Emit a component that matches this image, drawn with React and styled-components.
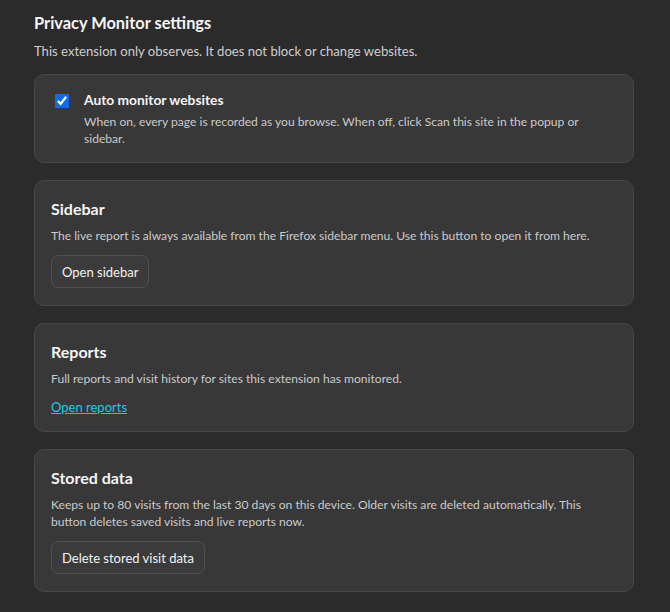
import React from "react";
import styled, { createGlobalStyle } from "styled-components";

const GlobalStyle = createGlobalStyle`
  html, body {
    margin: 0;
    background: #2b2b2b;
  }
  body {
    font-family: Lato, "Noto Sans", sans-serif;
    color: #f2f2f2;
  }
`;

const Page = styled.main`
  padding: 11px 36px 20px 34px;
  max-width: 600px;
`;

const PageTitle = styled.h1`
  margin: 0 0 8px;
  font-size: 16.4px;
  line-height: 24px;
  font-weight: 700;
  color: #f4f4f4;
`;

const Intro = styled.p`
  margin: 0 0 14px;
  font-size: 13.1px;
  line-height: 17px;
  color: #cfcfcf;
`;

const Stack = styled.div`
  display: flex;
  flex-direction: column;
  gap: 17px;
`;

const Card = styled.section`
  background: #383838;
  border: 1px solid #474747;
  border-radius: 10px;
  padding: ${(props) => (props.compact ? "16px 16px 15px" : "16px 16px 17px")};
`;

const CardTitle = styled.h2`
  margin: 0 0 6px;
  font-size: 16px;
  line-height: 24px;
  font-weight: 700;
  color: #f4f4f4;
`;

const Text = styled.p`
  margin: 0;
  font-size: 12.1px;
  line-height: 17px;
  color: #cbcbcb;
`;

const CheckRow = styled.label`
  display: flex;
  align-items: flex-start;
  gap: 15px;
  cursor: pointer;
`;

const Check = styled.input`
  width: 14px;
  height: 14px;
  margin: 3px 0 0 4px;
  accent-color: #0b6cf2;
  flex: none;
`;

const CheckText = styled.div`
  display: flex;
  flex-direction: column;
  gap: 4px;
`;

const CheckTitle = styled.span`
  font-size: 13.8px;
  line-height: 18px;
  font-weight: 700;
  color: #f4f4f4;
`;

const Button = styled.button`
  display: block;
  margin-top: 11px;
  height: 33px;
  padding: 0 10px;
  background: #3b3b3b;
  border: 1px solid #505050;
  border-radius: 7px;
  color: #f2f2f2;
  font-family: inherit;
  font-size: 13px;
  cursor: pointer;
  &:hover {
    background: #444;
  }
`;

const LinkRow = styled.p`
  margin: 14px 0 0;
  font-size: 13px;
  line-height: 13px;
`;

const Link = styled.a`
  color: #12cfe3;
  text-decoration: underline;
`;

export default function App() {
  return (
    <>
      <GlobalStyle />
      <Page>
        <PageTitle>Privacy Monitor settings</PageTitle>
        <Intro>This extension only observes. It does not block or change websites.</Intro>
        <Stack>
          <Card compact>
            <CheckRow>
              <Check type="checkbox" defaultChecked />
              <CheckText>
                <CheckTitle>Auto monitor websites</CheckTitle>
                <Text>
                  When on, every page is recorded as you browse. When off, click Scan this site in the popup or sidebar.
                </Text>
              </CheckText>
            </CheckRow>
          </Card>

          <Card>
            <CardTitle>Sidebar</CardTitle>
            <Text>
              The live report is always available from the Firefox sidebar menu. Use this button to open it from here.
            </Text>
            <Button type="button">Open sidebar</Button>
          </Card>

          <Card>
            <CardTitle>Reports</CardTitle>
            <Text>Full reports and visit history for sites this extension has monitored.</Text>
            <LinkRow>
              <Link href="#reports">Open reports</Link>
            </LinkRow>
          </Card>

          <Card>
            <CardTitle>Stored data</CardTitle>
            <Text>
              Keeps up to 80 visits from the last 30 days on this device. Older visits are deleted automatically. This button deletes saved visits and live reports now.
            </Text>
            <Button type="button">Delete stored visit data</Button>
          </Card>
        </Stack>
      </Page>
    </>
  );
}
